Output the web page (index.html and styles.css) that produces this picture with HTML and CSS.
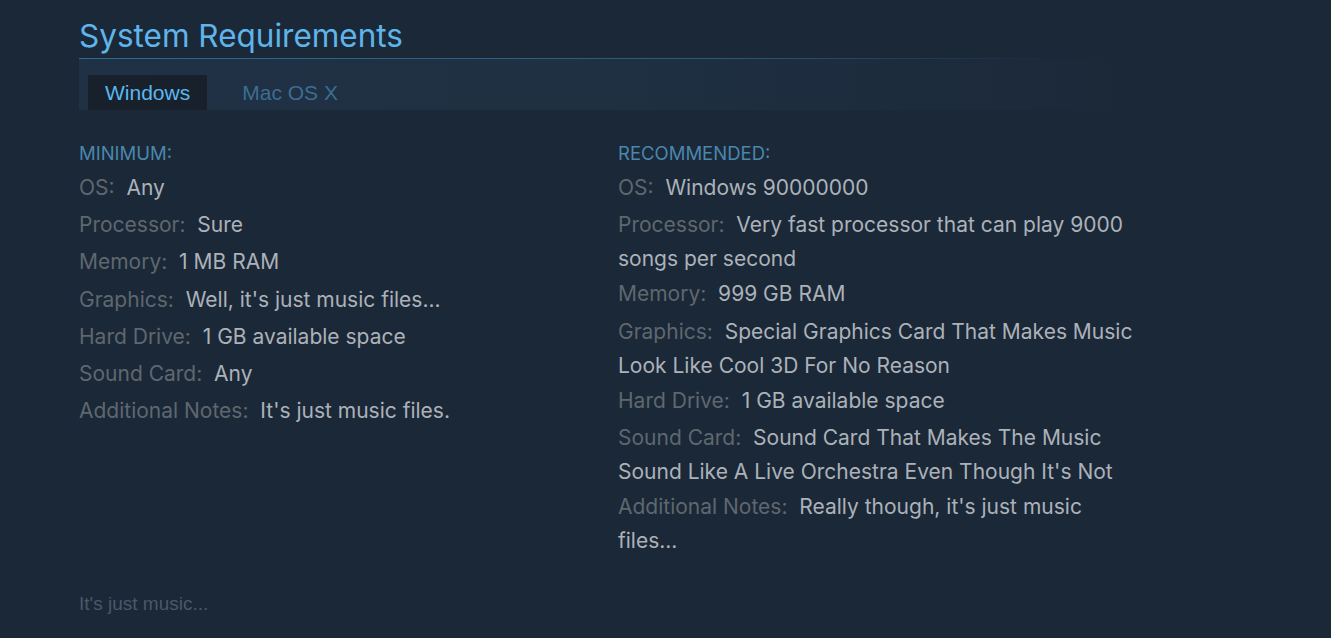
FILE: index.html
```html
<!DOCTYPE html>
<html>
<head>
<meta charset="utf-8">
<link rel="stylesheet" href="styles.css">
</head>
<body>
<div class="page">
  <h2 class="title">System Requirements</h2>
  <div class="tabs">
    <div class="tab active">Windows</div>
    <div class="tab">Mac OS X</div>
  </div>
  <div class="reqs">
    <div class="col">
      <div class="head">MINIMUM:</div>
      <ul>
        <li><span class="lbl">OS:</span>&nbsp; Any</li>
        <li><span class="lbl">Processor:</span>&nbsp; Sure</li>
        <li><span class="lbl">Memory:</span>&nbsp; 1 MB RAM</li>
        <li><span class="lbl">Graphics:</span>&nbsp; Well, it's just music files...</li>
        <li><span class="lbl">Hard Drive:</span>&nbsp; 1 GB available space</li>
        <li><span class="lbl">Sound Card:</span>&nbsp; Any</li>
        <li><span class="lbl">Additional Notes:</span>&nbsp; It's just music files.</li>
      </ul>
    </div>
    <div class="col">
      <div class="head">RECOMMENDED:</div>
      <ul>
        <li><span class="lbl">OS:</span>&nbsp; Windows 90000000</li>
        <li><span class="lbl">Processor:</span>&nbsp; Very fast processor that can play 9000 songs per second</li>
        <li><span class="lbl">Memory:</span>&nbsp; 999 GB RAM</li>
        <li><span class="lbl">Graphics:</span>&nbsp; Special Graphics Card That Makes Music Look Like Cool 3D For No Reason</li>
        <li><span class="lbl">Hard Drive:</span>&nbsp; 1 GB available space</li>
        <li><span class="lbl">Sound Card:</span>&nbsp; Sound Card That Makes The Music Sound Like A Live Orchestra Even Though It's Not</li>
        <li><span class="lbl">Additional Notes:</span>&nbsp; Really though, it's just music files...</li>
      </ul>
    </div>
  </div>
  <div class="foot">It's just music...</div>
</div>
</body>
</html>
```

FILE: styles.css
```css
html, body {
  margin: 0;
  padding: 0;
  background: #1b2838;
  height: 100%;
}
.page {
  padding: 14px 0 0 79px;
  width: 1056px;
}
.title {
  margin: 0;
  font-family: "Inter", "Noto Sans", sans-serif;
  font-weight: normal;
  font-size: 31.5px;
  line-height: 44px;
  color: #5fb5ea;
  padding-bottom: 1px;
  background: linear-gradient(to right, #2d6a8d 0%, #2a5b7a 60%, rgba(27,40,56,0) 93%) bottom left / 100% 1px no-repeat;
}
.tabs {
  display: flex;
  align-items: flex-end;
  height: 51px;
  padding-left: 9px;
  background: linear-gradient(to right, #203145 0%, #1f3043 50%, #1b2838 100%);
  width: 1047px;
}
.tab {
  font-family: "Liberation Sans", Arial, sans-serif;
  font-size: 21px;
  height: 35px;
  line-height: 35px;
  padding: 0 17px;
  color: #3d6d91;
}
.tab.active {
  background: #18202b;
  color: #5ab8f0;
  margin-right: 18px;
}
.reqs {
  display: grid;
  grid-template-columns: 539px 518px;
  margin-top: 31px;
}
.head {
  font-family: "Inter", "Noto Sans", sans-serif;
  font-size: 18.5px;
  color: #4a87ad;
  line-height: 24px;
  margin-bottom: 5px;
}
ul {
  list-style: none;
  margin: 0;
  padding: 0;
  font-family: "Inter", "Noto Sans", sans-serif;
  font-size: 21px;
  color: #acb2b8;
}
li {
  line-height: 32px;
  margin-bottom: 1.2px;
}
.lbl {
  color: #5f676e;
  line-height: 36px;
}
.foot {
  margin-top: 35px;
  font-family: "Liberation Sans", Arial, sans-serif;
  font-size: 19px;
  color: #4a5966;
}
```
